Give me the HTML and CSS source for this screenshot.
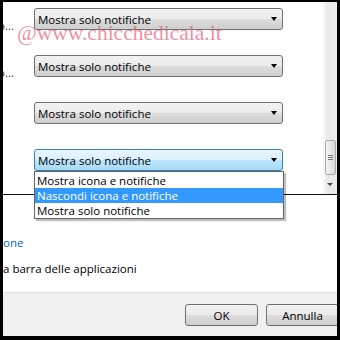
FILE: index.html
```html
<!DOCTYPE html>
<html>
<head>
<meta charset="utf-8">
<link rel="stylesheet" href="styles.css">
</head>
<body>
<div class="window">
  <div class="pane">
    <div class="rows">
      <div class="row">
        <div class="label"><span>so...</span></div>
        <div class="combo"><span>Mostra solo notifiche</span><i class="arrow"></i></div>
      </div>
      <div class="row">
        <div class="label"><span>go...</span></div>
        <div class="combo"><span>Mostra solo notifiche</span><i class="arrow"></i></div>
      </div>
      <div class="row">
        <div class="label"></div>
        <div class="combo"><span>Mostra solo notifiche</span><i class="arrow"></i></div>
      </div>
      <div class="row">
        <div class="label"></div>
        <div class="combo focus"><span>Mostra solo notifiche</span><i class="arrow"></i></div>
        <ul class="list">
          <li>Mostra icona e notifiche</li>
          <li class="sel">Nascondi icona e notifiche</li>
          <li>Mostra solo notifiche</li>
        </ul>
      </div>
      <div class="watermark">@www.chicchedicala.it</div>
    </div>
    <div class="scrollbar">
      <div class="track"></div>
      <div class="thumb"><i></i><i></i><i></i></div>
      <div class="down"><i class="arrow small"></i></div>
    </div>
  </div>
  <div class="info">
    <p class="link">one</p>
    <p class="text">a barra delle applicazioni</p>
  </div>
  <div class="footer">
    <button class="btn">OK</button>
    <button class="btn">Annulla</button>
  </div>
</div>
</body>
</html>
```

FILE: styles.css
```css
* { box-sizing: border-box; }
html, body { margin: 0; padding: 0; background: #000; }
body { font-family: "Open Sans", "Liberation Sans", sans-serif; font-size: 11.5px; color: #000; }

.window {
  width: 340px;
  height: 340px;
  border-top: 2px solid #000;
  border-left: 3px solid #000;
  border-right: 3px solid #000;
  border-bottom: 4px solid #000;
  background: #fff;
  display: flex;
  flex-direction: column;
  overflow: hidden;
}

.pane {
  height: 193px;
  flex: none;
  display: flex;
  border-bottom: 1px solid #111;
}

.rows {
  flex: 1;
  position: relative;
  display: flex;
  flex-direction: column;
  gap: 25px;
  padding-top: 6px;
}

.row {
  position: relative;
  display: flex;
  align-items: flex-start;
  height: 22px;
}

.label {
  width: 11px;
  overflow: hidden;
  display: flex;
  justify-content: flex-end;
  white-space: nowrap;
  padding-top: 10px;
  line-height: 15px;
  color: #333;
  margin-right: 20px;
  flex: none;
}

.combo {
  width: 249px;
  height: 22px;
  border: 1px solid #707070;
  border-radius: 3px;
  background: linear-gradient(#f2f2f2 0%, #ebebeb 50%, #dddddd 50%, #cfcfcf 100%);
  display: flex;
  align-items: center;
  padding-left: 3px;
  padding-right: 5px;
  line-height: 15px;
}
.combo span { flex: 1; }
.combo.focus {
  border-color: #3c7fb1;
  background: linear-gradient(#eaf6fd 0%, #d9f0fc 50%, #bee6fd 50%, #a7d9f5 100%);
}

.arrow {
  width: 0;
  height: 0;
  border-top: 4px solid #000;
  border-left: 3.5px solid transparent;
  border-right: 3.5px solid transparent;
}
.arrow.small { border-top-color: #444; border-top-width: 3px; border-left-width: 3px; border-right-width: 3px; }

.list {
  position: absolute;
  left: 31px;
  top: 22px;
  width: 250px;
  margin: 0;
  padding: 1px 0 0;
  list-style: none;
  background: #fff;
  border: 1px solid #646464;
  box-shadow: 2px 2px 1px rgba(0,0,0,0.25);
  z-index: 2;
}
.list li {
  height: 15px;
  line-height: 15px;
  padding-left: 2px;
}
.list li.sel { background: #3399ff; color: #fff; }

.watermark {
  position: absolute;
  left: 14px;
  top: 19px;
  font-family: "Liberation Serif", serif;
  font-size: 21.5px;
  line-height: 24px;
  color: rgba(228, 80, 105, 0.65);
  white-space: nowrap;
  z-index: 3;
}

.scrollbar {
  width: 14px;
  flex: none;
  display: flex;
  flex-direction: column;
  background: linear-gradient(90deg, #f7f7f7 0px, #f7f7f7 2px, #e9e9e9 3px, #ececec 100%);
}
.track { flex: 1; }
.thumb {
  height: 35px;
  margin: 0 1px 0 2px;
  border: 1px solid #a8a8a8;
  border-radius: 2px;
  background: linear-gradient(90deg, #f4f4f4, #e4e4e4 60%, #d6d6d6);
  display: flex;
  flex-direction: column;
  align-items: center;
  justify-content: center;
  gap: 1px;
}
.thumb i { width: 5px; height: 1px; background: #7a7a7a; }
.down {
  height: 19px;
  display: flex;
  align-items: center;
  justify-content: center;
}

.info { flex: 1; }
.info p { margin: 0; line-height: 15px; white-space: nowrap; }
.info .link { color: #0066cc; margin-top: 40px; }
.info .text { margin-top: 11px; }

.footer {
  height: 44px;
  flex: none;
  border-top: 1px solid #dfdfdf;
  background: #f0f0f0;
  display: flex;
  justify-content: flex-end;
  align-items: flex-start;
  gap: 8px;
  padding-top: 11px;
}
.btn {
  width: 73px;
  height: 22px;
  border: 1px solid #707070;
  border-radius: 3px;
  background: linear-gradient(#f2f2f2 0%, #ebebeb 50%, #dddddd 50%, #cfcfcf 100%);
  font-family: inherit;
  font-size: 11.5px;
  color: #000;
  padding: 0;
  flex: none;
}
.btn:last-child { margin-right: -2px; }
```
